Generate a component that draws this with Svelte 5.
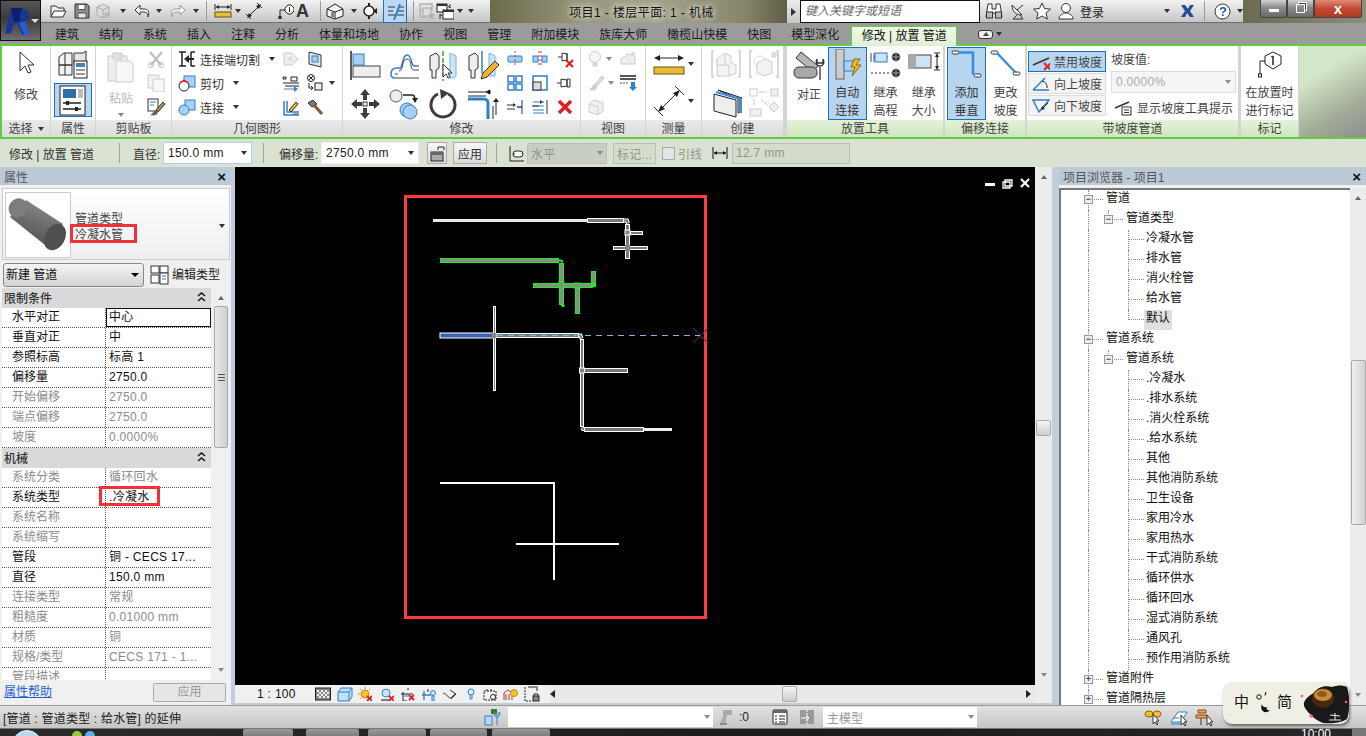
<script>
	const b = '#2f7fd0';
	const lb = '#a9d0f2';
	const icons = {
		open: `<path d="M2 15V4h5l2 2h6v3" fill="#f6f3e6" stroke="#333"/><path d="M2 15l3-6h12l-3 6z" fill="#fff" stroke="#333"/>`,
		save: `<path d="M2 2h12l2 2v12H2z" fill="#8c8f94" stroke="#333"/><rect x="5" y="2.500" width="7" height="5" fill="#fff" stroke="#555"/><rect x="5" y="11" width="8" height="5" fill="#e6e6e6" stroke="#555"/>`,
		sync: `<path d="M3 5l6-3 6 3v8l-6 3-6-3z" fill="#ddd" stroke="#aaa"/><path d="M3 5l6 3 6-3M9 8v8" fill="none" stroke="#aaa"/><circle cx="13" cy="13" r="3" fill="#bbb"/>`,
		undo: `<path d="M7 3L2 8l5 5V10h4c3 0 4 2 4 5 2-5 0-8-4-8H7z" fill="#fff" stroke="#333"/>`,
		redo: `<path d="M11 3l5 5-5 5V10H7c-3 0-4 2-4 5-2-5 0-8 4-8h4z" fill="#f4f4f4" stroke="#999"/>`,
		dim: `<path d="M1 2v6M17 2v6M2 5h14" stroke="#222" fill="none"/><path d="M2 5l3-2v4zM16 5l-3-2v4z" fill="#222"/><rect x="1" y="10" width="16" height="5" fill="#e7bd3a" stroke="#6b5310"/>`,
		diag: `<path d="M3 15L15 3" stroke="#222"/><path d="M2 16l2-5 3 3zM16 2l-5 2 3 3z" fill="#222"/><path d="M1 12l5 5M12 1l5 5" stroke="#222"/>`,
		tag: `<path d="M9 6l3-3h3l3 3v3l-3 3h-3L9 9z" fill="#fff" stroke="#222"/><path d="M9 8H4v7" fill="none" stroke="#222"/><rect x="2.500" y="14" width="3" height="3" fill="#222"/><path d="M13.500 5v5" stroke="#222"/>`,
		house: `<path d="M1 7l8-5 8 5v7l-8 3-8-3z" fill="#f4f4f4" stroke="#222"/><path d="M1 7l8 3 8-3M9 10v7" fill="none" stroke="#222"/><rect x="5" y="10" width="3" height="5" fill="#888"/>`,
		section: `<circle cx="9" cy="9" r="5" fill="#fff" stroke="#222" stroke-width="1.500"/><path d="M9 1v3M9 14v3" stroke="#222" stroke-width="2"/><path d="M13 9l4-3v6z" fill="#222"/>`,
		thin: `<path d="M2 5h7M2 9h5M2 13h7M13 5h7M12 9h7M11 13h7" stroke="#333"/><path d="M14 2L8 18" stroke="#2f7fd0" stroke-width="2"/>`,
		closed: `<path d="M3 2h12v6H3zM3 8v7h7" fill="none" stroke="#b3b3b3" stroke-width="1.500"/><rect x="6" y="6" width="8" height="8" fill="#ddd" stroke="#aaa"/><path d="M12 12l5 5M17 12l-5 5" stroke="#aaa" stroke-width="1.500"/>`,
		swin: `<rect x="1" y="2" width="10" height="8" fill="#fff" stroke="#222"/><rect x="1" y="2" width="10" height="2" fill="#333"/><rect x="7" y="8" width="11" height="9" fill="#fff" stroke="#222"/><rect x="7" y="8" width="11" height="2" fill="#333"/><path d="M14 2v4l-2-2M4 17v-5l2 2" fill="none" stroke="#222"/>`,
		cursor: `<path d="M7 2v19l5-5 3 7 3-1-3-7h6z" fill="#fff" stroke="#333"/>`,
		typeprops: `<path d="M2 8l5-4h8v12H2zM2 16h13v10H2z" fill="#f3f3f3" stroke="#333"/><path d="M17 4h9l3-2v14H17z" fill="#e4e4e4" stroke="#333"/><path d="M8 4v22" stroke="#333"/><rect x="17" y="12" width="13" height="17" fill="#fff" stroke="#222"/><rect x="19" y="14" width="9" height="4" fill="#4b7fb5"/><path d="M19 21h9M19 25h9" stroke="#333"/>`,
		props: `<rect x="2" y="1" width="25" height="29" fill="#fff" stroke="#222"/><rect x="5" y="4" width="13" height="9" fill="#2d6da8"/><rect x="20" y="4" width="5" height="9" fill="#bbb"/><path d="M5 18h18M5 24h18" stroke="#222" stroke-width="1.500"/><rect x="8" y="16" width="3" height="4" fill="#222"/><rect x="17" y="22" width="3" height="4" fill="#222"/>`,
		paste: `<rect x="1" y="4" width="19" height="25" fill="#eee" stroke="#ccc"/><rect x="6" y="1" width="9" height="6" fill="#e2e2e2" stroke="#ccc"/><path d="M9 9h14l3 3v18H9z" fill="#f7f7f7" stroke="#ccc"/>`,
		scissors: `<path d="M3 2l11 13M15 2L4 15" stroke="#bbb" stroke-width="2"/><circle cx="4" cy="15" r="2.500" fill="none" stroke="#bbb"/><circle cx="14" cy="15" r="2.500" fill="none" stroke="#bbb"/>`,
		copy: `<rect x="1" y="1" width="11" height="13" fill="#f2f2f2" stroke="#ccc"/><rect x="6" y="5" width="11" height="13" fill="#f8f8f8" stroke="#ccc"/>`,
		brush: `<rect x="1" y="1" width="10" height="12" fill="#fff" stroke="#333"/><path d="M3 4h6M3 7h4" stroke="#2f7fd0"/><path d="M16 4l-7 8 2 2 7-8z" fill="#b08a52" stroke="#333"/><path d="M9 12c-3 1-3 4-6 5 4 1 8 0 8-3z" fill="#666"/>`,
		cope: `<path d="M1 2h7M1 16h7M4 2v14M17 2h-4M17 16h-4M13 2v14" stroke="#222" stroke-width="1.500" fill="none"/><path d="M6 9l5-4v3h5v2h-5v3z" fill="#222"/>`,
		cut: `<rect x="6" y="2" width="11" height="11" fill="${lb}" stroke="${b}"/><circle cx="6" cy="12" r="5" fill="#fff" stroke="#222"/><path d="M2 9a5 5 0 0 1 8 0" fill="none" stroke="#d22" stroke-width="1.500"/>`,
		join: `<rect x="7" y="2" width="10" height="10" fill="${lb}" stroke="${b}"/><circle cx="6" cy="12" r="5" fill="${lb}" stroke="${b}"/>`,
		wallj: `<path d="M2 3h8l6 6-6 6H2z" fill="#eee" stroke="#ccc"/><path d="M10 6l-5 3 5 3z" fill="#ddd"/>`,
		openg: `<path d="M3 2l12 3v12L3 14z" fill="#e6e6e6" stroke="#333"/><rect x="6" y="6" width="6" height="6" fill="${lb}" stroke="#2f7fd0"/>`,
		wall2: `<path d="M1 9h16M3 12h14" stroke="#222"/><path d="M1 3v2h3V3z" fill="none" stroke="#222"/><path d="M2 15h10" stroke="${b}"/><path d="M12 12l4 3-4 3z" fill="${b}"/><path d="M9 3h6v4H9z" fill="none" stroke="#222"/>`,
		dmd: `<circle cx="5" cy="4" r="3.500" fill="#fff" stroke="#222"/><path d="M3 2l4 4M7 2L3 6" stroke="#222"/><rect x="9" y="9" width="7" height="7" fill="#eee" stroke="#222"/><path d="M3 9v5h4M5 12l2 2-2 2" fill="none" stroke="#222"/>`,
		joinprof: `<path d="M2 3v14h15M5 3v11h12" stroke="${b}" fill="none" stroke-width="1.500"/><path d="M7 12l7-8 2 2-7 8z" fill="#f0b030" stroke="#333"/><path d="M11 16h6" stroke="#555"/>`,
		hammer: `<path d="M2 5l5-3 4 4-5 3z" fill="#777" stroke="#333"/><path d="M8 7l8 9" stroke="#8a5a2a" stroke-width="3"/>`,
		align: `<path d="M1 1v29" stroke="#222" stroke-width="1.500"/><rect x="3" y="4" width="11" height="11" fill="${lb}" stroke="${b}"/><rect x="3" y="16" width="27" height="11" fill="#eee" stroke="#444"/>`,
		offset: `<path d="M2 24c0-4 2-6 6-6h3c3 0 2-13 7-13s4 11 7 11h5" fill="none" stroke="#2f7fd0" stroke-width="1.500"/><path d="M6 28h24M6 24h3M10 21c5 0 2-12 8-12s2 11 7 11h5" fill="none" stroke="#444"/><path d="M2 24c0 3 2 4 4 4" fill="none" stroke="#2f7fd0" stroke-width="1.500"/>`,
		mirrorp: `<path d="M2 6l6-3 3 3v12l-3 2v8H4v-8H2z" fill="#eee" stroke="#333"/><path d="M15 1v30" stroke="#3aaa3a" stroke-dasharray="5 2" stroke-width="1.500"/><path d="M28 6l-6-3v25h4l2-2z" fill="#cfe4f6" stroke="#7fb2de"/><path d="M15 14v13l3-3 2 4 2-1-2-4h4z" fill="#fff" stroke="#333"/>`,
		mirrord: `<path d="M2 6l6-3 3 3v12l-3 2v8H4v-8H2z" fill="#eee" stroke="#333"/><path d="M15 1v22" stroke="#2f7fd0" stroke-width="1.500"/><path d="M28 6l-6-3v23h6z" fill="#cfe4f6" stroke="#7fb2de"/><path d="M14 29l2-6 12-12 4 4-12 12z" fill="#f0b030" stroke="#333"/>`,
		move: `<path d="M15 1l5 6h-3v5h-4V7h-3zM15 31l5-6h-3v-5h-4v5h-3zM1 16l6-5v3h5v4H7v3zM30 16l-6-5v3h-5v4h5v3z" fill="#3c3c3c"/><rect x="13" y="14" width="4" height="4" fill="#fff" stroke="#333"/>`,
		copy2: `<circle cx="7" cy="8" r="6" fill="#eee" stroke="#555"/><path d="M14 7h9c3 0 3 4 3 5" fill="none" stroke="#222" stroke-width="1.500"/><path d="M23 10l3 5 3-5z" fill="#222"/><circle cx="18" cy="22" r="7" fill="${lb}" stroke="${b}"/><circle cx="21" cy="24" r="7" fill="${lb}" stroke="${b}"/>`,
		rotate: `<path d="M10 6a12 12 0 1 0 10 0" fill="none" stroke="#3c3c3c" stroke-width="3"/><path d="M12 1l9 4-8 6z" fill="#3c3c3c"/>`,
		trim: `<path d="M1 8h18M1 4h18" stroke="#222"/><path d="M19 4l4-2v4zM29 27V14" stroke="#222"/><path d="M1 11h16a4 4 0 0 1 4 4v16" fill="none" stroke="#2f7fd0" stroke-width="3"/><path d="M26 14l3-4 3 4z" fill="#222"/><path d="M26 18v13" stroke="#222"/>`,
		split: `<rect x="2" y="6" width="14" height="6" rx="1" fill="${lb}" stroke="${b}"/><path d="M9 1v16" stroke="#d33" stroke-dasharray="2 2"/>`,
		gap: `<rect x="2" y="6" width="5" height="6" fill="${lb}" stroke="${b}"/><rect x="11" y="6" width="5" height="6" fill="${lb}" stroke="${b}"/><path d="M8 1v16M10 1v16" stroke="#d33" stroke-dasharray="2 2"/>`,
		unpin: `<path d="M2 7h4M6 3v8l5-1V4z" fill="none" stroke="#333"/><path d="M11 3v8" stroke="#333"/><path d="M10 10l7 7M17 10l-7 7" stroke="#d22" stroke-width="2.200"/>`,
		array: `<rect x="2" y="2" width="6" height="6" fill="none" stroke="${b}" stroke-width="1.500"/><rect x="10" y="2" width="6" height="6" fill="none" stroke="${b}" stroke-width="1.500"/><rect x="2" y="10" width="6" height="6" fill="none" stroke="${b}" stroke-width="1.500"/><rect x="10" y="10" width="6" height="6" fill="none" stroke="${b}" stroke-width="1.500"/>`,
		scale: `<path d="M2 2h14v14H2z" fill="none" stroke="${b}" stroke-width="1.500"/><rect x="2" y="8" width="8" height="8" fill="#ddd" stroke="#333"/>`,
		pin: `<path d="M1 9h4M5 5v8l6-1V6zM11 5v8h3V5z" fill="none" stroke="#333"/>`,
		sp1: `<path d="M1 7h8M1 11h8" stroke="#333"/><path d="M7 5l3 2-3 2z" fill="#333"/><path d="M11 9h5" stroke="${b}" stroke-width="2"/><path d="M16 2v14" stroke="#333"/>`,
		sp2: `<path d="M2 4h11M2 8h11M2 12h11M2 15h11" stroke="${b}"/><path d="M1 8h7" stroke="#333"/><path d="M16 2v14" stroke="#333"/><path d="M9 2l3 2-3 2z" fill="#333"/>`,
		del: `<path d="M3 3l12 12M15 3L3 15" stroke="#e02020" stroke-width="3.500"/>`,
		bulb: `<circle cx="8" cy="7" r="5.500" fill="#f5f5f5" stroke="#ccc"/><path d="M6 13h4v3H6z" fill="#ddd" stroke="#ccc"/>`,
		brick: `<path d="M2 9l7-5 7 2v8H2z" fill="#eee" stroke="#ccc"/><circle cx="14" cy="4" r="2" fill="#ddd"/>`,
		paint: `<path d="M15 2l-7 8 2 2 7-8z" fill="#ddd" stroke="#ccc"/><path d="M8 10c-3 1-3 4-6 6 4 1 8 0 8-3z" fill="#ccc"/>`,
		thinw: `<path d="M1 2h16M1 5h16" stroke="#222" stroke-width="1.500"/><path d="M1 9h9" stroke="#555" stroke-dasharray="2 1"/><path d="M12 8h4v5h2l-4 4-4-4h2z" fill="${b}"/>`,
		wallbox: `<path d="M2 6l5-4 9 3v8l-5 4-9-3z" fill="#f0f0f0" stroke="#ccc"/><path d="M2 6l9 3v8" fill="none" stroke="#ccc"/>`,
		measure: `<path d="M4 6h24" stroke="#222"/><path d="M1 6l6-3v6zM31 6l-6-3v6z" fill="#222"/><rect x="1" y="15" width="30" height="7" fill="#e8bc35" stroke="#6b5310"/>`,
		mdiag: `<path d="M6 26L26 6" stroke="#222"/><path d="M5 27l3-7 4 4zM27 5l-7 3 4 4z" fill="#222"/><path d="M1 22l9 9M22 1l9 9" stroke="#222"/>`,
		cbox: `<path d="M3 2H1v26h2M27 2h2v26h-2" fill="none" stroke="#ccc" stroke-width="1.500"/><path d="M6 10l8-6 6 3v7l5 2v8l-7 3H6z" fill="#f4f4f4" stroke="#ccc"/><path d="M6 16h12v11M14 4v12" fill="none" stroke="#ccc"/>`,
		cvoid: `<path d="M3 2H1v26h2M27 2h2v26h-2" fill="none" stroke="#ccc" stroke-width="1.500"/><circle cx="11" cy="13" r="6" fill="none" stroke="#ddd"/><path d="M8 14l8-4 7 3v11l-8 3-7-3z" fill="#f2f2f2" stroke="#ccc"/><circle cx="25" cy="6" r="3" fill="#ddd"/>`,
		groups: `<path d="M4 8l22 6v17L4 25z" fill="#eee" stroke="#222"/><path d="M8 4l24 8v14l-4 1V13z" fill="#d5dce4" stroke="#222"/><path d="M6 6l24 7v14" fill="none" stroke="#3a8cdc" stroke-width="2"/>`,
		assembly: `<rect x="1" y="3" width="7" height="7" fill="none" stroke="#ccc"/><path d="M10 6h8" stroke="#ccc"/><rect x="22" y="3" width="7" height="7" fill="#eee" stroke="#ccc"/><path d="M5 12v8M12 13l7 7" stroke="#ccc"/><rect x="1" y="23" width="11" height="7" fill="#f0f0f0" stroke="#ccc"/><path d="M25 16l5 5-5 5-5-5z" fill="#eee" stroke="#ccc"/>`,
		jalign: `<path d="M3 8l5-6 17 14-5 6z" fill="#b5b5b5" stroke="#333"/><rect x="1" y="17" width="23" height="11" rx="5" fill="#a8a8a8" stroke="#333"/><path d="M27 17v13M24 9c-2 4 0 7 3 7s5-3 3-7v4h-6z" fill="#fff" stroke="#333" stroke-width="1.300"/>`,
		auto: `<rect x="5" y="0" width="8" height="30" fill="#ccc" stroke="#666"/><path d="M13 12h12v10H13z" fill="${lb}" stroke="${b}"/><path d="M23 10l6 0-4 6h5l-9 11 3-9h-4z" fill="#f5b921" stroke="#8a6408"/>`,
		inhele: `<path d="M1 4v9M4 4v9M4 8h14" stroke="#444" fill="none"/><rect x="5" y="4" width="12" height="9" fill="#cde4f6" stroke="${b}"/><path d="M1 24h22" stroke="#333" stroke-dasharray="2 2"/><circle cx="26" cy="8" r="4" fill="#333"/><circle cx="26" cy="24" r="4" fill="#333"/><path d="M21 8h10M26 3v10M21 24h10M26 19v10" stroke="#999"/>`,
		inhsize: `<rect x="1" y="6" width="22" height="13" fill="#cde4f6" stroke="#444"/><rect x="1" y="6" width="7" height="13" fill="#aaa"/><path d="M26 4h6M26 21h6M29 6v13" stroke="#222"/><path d="M29 4l-2 4h4zM29 21l-2-4h4z" fill="#222"/>`,
		addv: `<rect x="1" y="2" width="7" height="3" rx="1.500" fill="#fff" stroke="#333"/><path d="M8 3.500h14v22" fill="none" stroke="#3a8cdc" stroke-width="2.500"/><rect x="23" y="25" width="7" height="3" rx="1.500" fill="#fff" stroke="#333"/>`,
		chg: `<rect x="1" y="2" width="7" height="3" rx="1.500" fill="#fff" stroke="#333"/><path d="M7 4l18 19" fill="none" stroke="#3a8cdc" stroke-width="2.500"/><rect x="23" y="23" width="7" height="3" rx="1.500" fill="#fff" stroke="#333"/>`,
		noslope: `<path d="M1 12l16-7" stroke="#333" stroke-width="1.500"/><path d="M12 10l7 7M19 10l-7 7" stroke="#d22" stroke-width="2"/>`,
		up: `<path d="M1 15h16M1 15L13 3" stroke="${b}" stroke-width="1.500"/><path d="M10 6a6 6 0 0 1 5 7" fill="none" stroke="#222"/>`,
		down: `<path d="M1 3h16L7 15z" fill="none" stroke="${b}" stroke-width="1.500"/><path d="M16 6l-5 5" stroke="#222"/><path d="M9 13l1-4 3 3z" fill="#222"/>`,
		slopetip: `<path d="M1 10l14-6" stroke="#333" stroke-width="1.500"/><rect x="8" y="9" width="9" height="8" fill="#fff" stroke="#333"/><path d="M10 12h5M10 14.500h5" stroke="#333"/>`,
		tagp: `<path d="M17 2l8 4v8l-8 5-8-5V6z" fill="#fff" stroke="#222"/><path d="M17 6v9" stroke="#222" stroke-width="1.500"/><path d="M15 7l2-1" stroke="#222"/><path d="M9 11H4v14" fill="none" stroke="#222"/><rect x="2.500" y="24" width="3" height="3" fill="#fff" stroke="#222"/>`,
		lock: `<path d="M9 6V3h6v3" fill="none" stroke="#222"/><rect x="2" y="8" width="12" height="9" fill="#aaa" stroke="#222"/><rect x="2" y="8" width="12" height="3" fill="#666"/>`,
		level: `<path d="M2 1v15h14" fill="none" stroke="#222"/><rect x="5" y="6" width="10" height="6" rx="3" fill="#fff" stroke="#222"/><path d="M5 9h2" stroke="#222"/>`,
		width: `<path d="M1 2v12M15 2v12M2 8h12" stroke="#111"/><path d="M2 8l3-2v4zM14 8l-3-2v4z" fill="#111"/>`,
		etype: `<rect x="1" y="1" width="8" height="7" fill="#fff" stroke="#333"/><rect x="10" y="1" width="8" height="7" fill="#fff" stroke="#333"/><rect x="1" y="10" width="8" height="8" fill="#fff" stroke="#333"/><rect x="10" y="8" width="8" height="11" fill="#fff" stroke="#333"/><path d="M12 11h4M12 14h4" stroke="#2f7fd0"/>`,
		detail: `<rect x="0.500" y="1" width="15" height="12" fill="#888" stroke="#222"/><path d="M2 3h2v2H2zM6 3h2v2H6zM10 3h2v2h-2zM4 5h2v2H4zM8 5h2v2H8zM12 5h2v2h-2zM2 7h2v2H2zM6 7h2v2H6zM10 7h2v2h-2zM4 9h2v2H4zM8 9h2v2H8zM12 9h2v2h-2z" fill="#eee"/>`,
		vstyle: `<path d="M1 6l3-4h11v9l-3 4H1z" fill="#bfe0f6" stroke="${b}"/><path d="M1 6h11v9M12 6l3-4" fill="none" stroke="${b}"/>`,
		sun: `<circle cx="7" cy="7" r="4" fill="#f4c430" stroke="#c58a10"/><path d="M7 0v2M0 7h2M2 2l1 1M12 2l-1 1M2 12l1-1" stroke="#c58a10"/><path d="M9 9l5 5M14 9l-5 5" stroke="#d22" stroke-width="1.800"/>`,
		shadow: `<circle cx="6" cy="6" r="4" fill="#cfe6f8" stroke="${b}"/><path d="M1 13h8" stroke="#555" stroke-width="1.500"/><path d="M9 9l5 5M14 9l-5 5" stroke="#d22" stroke-width="1.800"/>`,
		crop: `<path d="M1 7h12M3 5v9h4" fill="none" stroke="#222"/><path d="M8 1v2" stroke="#222"/><path d="M4 9h5" stroke="${b}"/><path d="M9 8l5 5M14 8l-5 5" stroke="#d22" stroke-width="1.800"/>`,
		crop2: `<path d="M1 8h9M3 4v9" stroke="${b}" stroke-width="1.400" fill="none"/><path d="M7 2v3" stroke="#222"/><circle cx="12" cy="6" r="2.500" fill="#cfe6f8" stroke="${b}"/><path d="M11 9h2v5h-2z" fill="#cfe6f8" stroke="${b}"/>`,
		glass: `<path d="M1 6c2-3 5 4 7 4 3 0 3-4 6-4M8 2l6 4-5 5" fill="none" stroke="#333"/>`,
		bulb2: `<circle cx="4" cy="4" r="3" fill="#d7eeff" stroke="${b}"/><path d="M3 7v4h2V7" fill="none" stroke="${b}"/>`,
		camera: `<path d="M1 4h12v9H1z" fill="none" stroke="#222" stroke-dasharray="2 1"/><circle cx="10" cy="10" r="2.500" fill="#fff" stroke="#222"/><path d="M4 2v2M8 2v2" stroke="#222"/>`,
		fam: `<path d="M1 13V6l4-3 4 3v7M3 7v6M6 7v6" fill="none" stroke="#b33"/><circle cx="11" cy="6" r="3.500" fill="#f4c430" stroke="#c58a10"/>`,
		dimlock: `<path d="M1 1v14h6" fill="none" stroke="#222" stroke-dasharray="2 1"/><path d="M4 1h8M13 0v5" stroke="#222"/><rect x="9" y="10" width="6" height="5" fill="#888" stroke="#222"/><path d="M10 10V8h4v2" fill="none" stroke="#222"/>`,
		wset: `<path d="M7 1h6v5H7z" fill="#3c7a2e"/><rect x="1" y="8" width="7" height="9" fill="#bcd6ee" stroke="${b}"/><path d="M13 7v10M11 4c-2 3 0 5 2 5s4-2 2-5v3h-4z" fill="#fff" stroke="${b}"/>`,
		press: `<path d="M5 1h9v5H9l-2 9H2l3-7z" fill="#aaa"/><path d="M2 15h7" stroke="#888" stroke-width="2"/>`,
		plist: `<rect x="1" y="1" width="14" height="14" rx="1" fill="#fff" stroke="#222"/><rect x="1" y="1" width="14" height="3" fill="#666"/><path d="M3 7h2M7 7h6M3 10h2M7 10h6M3 13h2M7 13h6" stroke="#222"/>`,
		movein: `<rect x="1" y="1" width="14" height="14" fill="#999"/><path d="M8 1v14" stroke="#fff" stroke-dasharray="2 1"/><path d="M2 9h8M7 6l3 3-3 3" fill="none" stroke="#fff"/>`,
		k1: `<ellipse cx="5" cy="5" rx="4" ry="3" fill="#f0c030" stroke="#8a6408"/><ellipse cx="13" cy="5" rx="4" ry="3" fill="#f0c030" stroke="#8a6408"/><path d="M9 5v10l2-2 2 3 1-1-2-3h3z" fill="#fff" stroke="#333"/>`,
		k2: `<path d="M1 13L8 3h9l-6 10z" fill="#fff" stroke="${b}"/><path d="M3 9h6M1 15h9" stroke="${b}"/><path d="M11 6v10l2-2 2 3 1-1-2-3h3z" fill="#fff" stroke="#333"/>`,
		k3: `<path d="M3 1h8v3H3zM1 6h11v3H1z" fill="#f0a060" stroke="#8a4a10"/><path d="M6 9v7" stroke="#666" stroke-width="1.500"/><path d="M12 6v10l2-2 2 3 1-1-2-3h3z" fill="#fff" stroke="#333"/>`
	};

	const qat = [
		{ n: 'open', ml: 8 }, { n: 'save', ml: 6 }, { n: 'sync', ml: 3 }, { d: 1, ml: 8 },
		{ n: 'undo', ml: 7 }, { d: 1, ml: 5 }, { n: 'redo', ml: 7 }, { d: 1, ml: 6 }, { s: 1, ml: 7 },
		{ n: 'dim', ml: 7 }, { d: 1, ml: 3 }, { n: 'diag', ml: 4 }, { n: 'tag', ml: 13 }, { t: 'A', ml: 2 }, { s: 1, ml: 8 },
		{ n: 'house', ml: 5 }, { d: 1, ml: 7 }, { n: 'section', ml: 3 }, { n: 'thin', ml: 6, on: 1 }, { s: 1, ml: 5 },
		{ n: 'closed', ml: 3 }, { n: 'swin', ml: 1 }, { d: 1, ml: 3 }, { d: 1, ml: 5, bar: 1 }
	];

	const tabs = ['建筑', '结构', '系统', '插入', '注释', '分析', '体量和场地', '协作', '视图', '管理', '附加模块', '族库大师', '橄榄山快模', '快图', '模型深化'];

	const constraint = [
		['水平对正', '中心', 0, 1], ['垂直对正', '中', 0], ['参照标高', '标高 1', 0], ['偏移量', '2750.0', 0],
		['开始偏移', '2750.0', 1], ['端点偏移', '2750.0', 1], ['坡度', '0.0000%', 1]
	];
	const mech = [
		['系统分类', '循环回水', 1], ['系统类型', '.冷凝水', 0], ['系统名称', '', 1], ['系统缩写', '', 1],
		['管段', '铜 - CECS 17...', 0], ['直径', '150.0 mm', 0], ['连接类型', '常规', 1], ['粗糙度', '0.01000 mm', 1],
		['材质', '铜', 1], ['规格/类型', 'CECS 171 - 1...', 1], ['管段描述', '', 1]
	];

	const tree = [
		['管道', 0, 'm'], ['管道类型', 1, 'm'], ['冷凝水管', 2], ['排水管', 2], ['消火栓管', 2], ['给水管', 2], ['默认', 2, 'sel'],
		['管道系统', 0, 'm'], ['管道系统', 1, 'm'], ['.冷凝水', 2], ['.排水系统', 2], ['.消火栓系统', 2], ['.给水系统', 2], ['其他', 2],
		['其他消防系统', 2], ['卫生设备', 2], ['家用冷水', 2], ['家用热水', 2], ['干式消防系统', 2], ['循环供水', 2], ['循环回水', 2],
		['湿式消防系统', 2], ['通风孔', 2], ['预作用消防系统', 2], ['管道附件', 0, 'p'], ['管道隔热层', 0, 'p']
	];

	const viewIcons = [['detail', 16, 14, 17], ['vstyle', 16, 16, 6], ['sun', 14, 14, 5], ['shadow', 14, 14, 8], ['crop', 15, 14, 6], ['crop2', 15, 14, 6], ['glass', 15, 13, 6], ['bulb2', 8, 12, 10], ['camera', 14, 14, 8], ['fam', 16, 14, 6], ['dimlock', 16, 16, 5]];

	const white = [[587, 218, 37, 5], [625, 224, 5, 35], [630, 231, 13, 4], [613, 246, 35, 4], [493, 306, 3, 85], [496, 333, 83, 5], [580, 339, 4, 88], [584, 368, 44, 5], [584, 427, 60, 5]];
	const green = [[440, 258, 119, 5], [559, 263, 5, 42], [533, 283, 60, 5], [591, 271, 5, 16], [575, 288, 5, 26]];
	const buttons = [[50, 243], [53, 306], [58, 368], [57, 430], [58, 492]];
</script>

{#snippet ic(name, w = 18, h = w)}
	<svg class="ic" width={w} height={h} viewBox="0 0 {w} {h}">{@html icons[name]}</svg>
{/snippet}

{#snippet big(name, l1, l2 = '', on = false, dim = false, w = 32, h = 32)}
	<div class="big" class:on class:dim>
		<div class="bigicon">{@render ic(name, w, h)}</div>
		<span>{l1}</span>
		{#if l2}<span>{l2}</span>{/if}
	</div>
{/snippet}

{#snippet chevrons()}
	<svg class="chev" width="9" height="10" viewBox="0 0 9 10"><path d="M1 4l3.500-3L8 4M1 9l3.500-3L8 9" fill="none" stroke="#111" stroke-width="1.500"/></svg>
{/snippet}

<div class="app">
	<div class="appbtn">
		<svg width="30" height="34" viewBox="0 0 30 34"><path d="M2 30L8 4h11l6 4 1 6-4 4 5 13h-8l-4-11-4-1-3 10z" fill="#1a3596"/><path d="M8 4l3 14 7-2-2-3 3-9z" fill="#0e1f68"/><path d="M16 19l6-2 5 14h-6z" fill="#2c5cd4"/></svg>
		<i class="tri light"></i>
	</div>

	<div class="title">
		<div class="qat">
			{#each qat as q}
				{#if q.s}
					<i class="qsep" style="margin-left:{q.ml}px"></i>
				{:else if q.d}
					<i class="tri" class:bar={q.bar} style="margin-left:{q.ml}px"></i>
				{:else if q.t}
					<b class="bigA" style="margin-left:{q.ml}px">{q.t}</b>
				{:else}
					<span class="qb" class:on={q.on} style="margin-left:{q.ml}px">{@render ic(q.n)}</span>
				{/if}
			{/each}
		</div>
		<div class="doc"><span>项目1 - 楼层平面: 1 - 机械</span></div>
		<div class="arrowcell"><i class="tri r"></i></div>
		<div class="search">键入关键字或短语</div>
		<div class="tools">
			<svg class="tool" width="18" height="18" viewBox="0 0 18 18"><path d="M3 2h4v5h4V2h4l2 13H11v-4H7v4H1z" fill="#fff" stroke="#333"/><rect x="1.500" y="10" width="6" height="6" fill="#bbb" stroke="#333"/><rect x="10.500" y="10" width="6" height="6" fill="#bbb" stroke="#333"/></svg>
			<svg class="tool" width="18" height="18" viewBox="0 0 18 18"><path d="M3 3c0 7 4 10 10 10" fill="#eee" stroke="#333"/><path d="M3 3l10 10" stroke="#333"/><path d="M8 8l6-5M8 13l-4 4h10l-3-4" fill="none" stroke="#333"/></svg>
			<svg class="tool" width="18" height="18" viewBox="0 0 18 18"><path d="M9 1l2.500 5.500 6 .6-4.500 4 1.300 6L9 14l-5.300 3.100 1.300-6-4.500-4 6-.6z" fill="#fff" stroke="#333"/></svg>
			<svg class="tool" width="18" height="18" viewBox="0 0 18 18"><circle cx="9" cy="6" r="4.500" fill="#fff" stroke="#333"/><path d="M2 17c0-4 4-5 5-6h4c1 1 5 2 5 6z" fill="#fff" stroke="#333"/></svg>
			<span class="login">登录</span>
			<i class="tri t1"></i>
			<svg class="xlogo" width="15" height="14" viewBox="0 0 15 14"><path d="M1 1h4l3 4 2-4h4l-4 6 4 6h-4L7 9l-2 4H1l4-6z" fill="#1f4e96"/></svg>
			<i class="qsep t2"></i>
			<svg class="help" width="17" height="17" viewBox="0 0 17 17"><circle cx="8.500" cy="8.500" r="7.500" fill="#fff" stroke="#333"/></svg>
			<b class="q">?</b>
			<i class="tri t3"></i>
		</div>
		<div class="winside">
			<div class="wbtn"><i class="wmin"></i></div>
			<div class="wbtn"><i class="wres"></i></div>
			<div class="wbtn wclose">x</div>
		</div>
	</div>

	<div class="tabs">
		{#each tabs as t}<span class="tab">{t}</span>{/each}
		<span class="tab active">修改 | 放置 管道</span>
		<span class="tabmin"><i class="tri up"></i></span>
		<i class="tri t4"></i>
	</div>

	<div class="ribbon">
		<section class="panel" style="width:48px">
			<div class="pbody">{@render big('cursor', '修改', '', false, false, 26, 32)}</div>
			<footer>选择 <i class="tri"></i></footer>
		</section>
		<section class="panel" style="width:44px">
			<div class="pbody col">
				<div class="typeic">{@render ic('typeprops', 32, 32)}</div>
				<div class="propbtn">{@render ic('props', 30, 31)}</div>
			</div>
			<footer>属性</footer>
		</section>
		<section class="panel" style="width:75px">
			<div class="pbody">
				<div class="clip">
					<div class="bigicon tallic">{@render ic('paste', 28, 32)}</div>
					<span class="dimt">粘贴</span>
					<i class="tri grey mt"></i>
				</div>
				<div class="smallcol">
					<div>{@render ic('scissors')}</div>
					<div>{@render ic('copy')}</div>
					<div>{@render ic('brush')}</div>
				</div>
			</div>
			<footer>剪贴板</footer>
		</section>
		<section class="panel" style="width:170px">
			<div class="pbody geo">
				<div class="grow">{@render ic('cope')}<span>连接端切割</span><i class="tri"></i></div>
				<div class="cell">{@render ic('wallj')}</div>
				<div class="cell">{@render ic('openg')}</div>
				<div class="grow">{@render ic('cut')}<span>剪切</span><i class="tri"></i></div>
				<div class="cell">{@render ic('wall2')}</div>
				<div class="cell wide">{@render ic('dmd')}<i class="tri"></i></div>
				<div class="grow">{@render ic('join')}<span>连接</span><i class="tri"></i></div>
				<div class="cell">{@render ic('joinprof')}</div>
				<div class="cell">{@render ic('hammer')}</div>
			</div>
			<footer>几何图形</footer>
		</section>
		<section class="panel" style="width:237px">
			<div class="pbody">
				<div class="modbig">
					{#each ['align', 'offset', 'mirrorp', 'mirrord', 'move', 'copy2', 'rotate', 'trim'] as n}
						<div>{@render ic(n, 32, 32)}</div>
					{/each}
				</div>
				<div class="modsmall">
					{#each ['split', 'gap', 'unpin', 'array', 'scale', 'pin', 'sp1', 'sp2', 'del'] as n}
						<div>{@render ic(n)}</div>
					{/each}
				</div>
			</div>
			<footer>修改</footer>
		</section>
		<section class="panel" style="width:64px">
			<div class="pbody viewg">
				<div>{@render ic('bulb', 16, 18)}<i class="tri grey"></i></div>
				<div>{@render ic('brick')}</div>
				<div>{@render ic('paint')}<i class="tri grey"></i></div>
				<div>{@render ic('thinw')}</div>
				<div>{@render ic('wallbox')}</div>
				<div></div>
			</div>
			<footer>视图</footer>
		</section>
		<section class="panel" style="width:55px">
			<div class="pbody measure">
				<div>{@render ic('measure', 32, 24)}<i class="tri"></i></div>
				<div>{@render ic('mdiag', 32, 32)}<i class="tri"></i></div>
			</div>
			<footer>测量</footer>
		</section>
		<section class="panel" style="width:81px">
			<div class="pbody create">
				<div>{@render ic('cbox', 30, 30)}</div>
				<div>{@render ic('cvoid', 30, 30)}</div>
				<div>{@render ic('groups', 32, 32)}</div>
				<div>{@render ic('assembly', 30, 32)}</div>
			</div>
			<footer>创建</footer>
		</section>
		<section class="panel ctx first" style="width:156px">
			<div class="pbody pad3">
				{@render big('jalign', '对正')}
				{@render big('auto', '自动', '连接', true)}
				{@render big('inhele', '继承', '高程')}
				{@render big('inhsize', '继承', '大小')}
			</div>
			<footer>放置工具</footer>
		</section>
		<section class="panel ctx next" style="width:80px">
			<div class="pbody pad2">
				{@render big('addv', '添加', '垂直', true)}
				{@render big('chg', '更改', '坡度')}
			</div>
			<footer>偏移连接</footer>
		</section>
		<section class="panel ctx next" style="width:211px">
			<div class="pbody slope">
				<div class="slopebtns">
					<div class="sb on">{@render ic('noslope')}禁用坡度</div>
					<div class="sb">{@render ic('up')}向上坡度</div>
					<div class="sb">{@render ic('down')}向下坡度</div>
				</div>
				<div class="slopeval">
					<span class="sl">坡度值:</span>
					<div class="sc">0.0000%<i class="tri grey"></i></div>
					<div class="st">{@render ic('slopetip')}显示坡度工具提示</div>
				</div>
			</div>
			<footer>带坡度管道</footer>
		</section>
		<section class="panel ctx last" style="width:57px">
			<div class="pbody">{@render big('tagp', '在放置时', '进行标记', false, false, 28, 30)}</div>
			<footer>标记</footer>
		</section>
		<div class="ribfill"></div>
	</div>

	<div class="options">
		<span class="o1">修改 | 放置 管道</span>
		<i class="osep s1"></i>
		<span class="o2">直径:</span>
		<div class="ocombo c1">150.0 mm<i class="tri"></i></div>
		<i class="osep s2"></i>
		<span class="o3">偏移量:</span>
		<div class="ocombo c2">2750.0 mm<i class="tri"></i></div>
		<div class="obtn lock">{@render ic('lock', 16, 18)}</div>
		<div class="obtn apply">应用</div>
		<i class="osep s3"></i>
		<div class="olevel">{@render ic('level', 16, 17)}</div>
		<div class="odis level">水平<i class="tri grey"></i></div>
		<div class="odis tagb">标记...</div>
		<i class="chk"></i>
		<span class="lead">引线</span>
		<div class="owidth">{@render ic('width', 16, 16)}</div>
		<div class="odis dist">12.7 mm</div>
	</div>

	<div class="main">
		<aside class="props">
			<header class="phead"><span>属性</span><b>×</b></header>
			<div class="typesel">
				<div class="thumb">
					<svg width="64" height="64" viewBox="0 0 64 64">
						<defs><linearGradient id="cy" x1="0.700" y1="0" x2="0.300" y2="1"><stop offset="0" stop-color="#8c8c8c"/><stop offset="0.500" stop-color="#6a6a6a"/><stop offset="1" stop-color="#4a4a4a"/></linearGradient></defs>
						<path d="M4 24L20 7l37 24-13 25z" fill="url(#cy)"/>
						<ellipse cx="49" cy="44" rx="10" ry="14" transform="rotate(28 49 44)" fill="#4f4f4f"/>
						<ellipse cx="12" cy="15" rx="9" ry="10" transform="rotate(35 12 15)" fill="#7d7d7d"/>
					</svg>
				</div>
				<div class="typetxt"><span>管道类型</span><span>冷凝水管</span></div>
				<i class="tri arrow"></i>
				<div class="redbox one"></div>
			</div>
			<div class="newrow">
				<div class="newcombo"><span>新建 管道</span><i class="tri"></i></div>
				<div class="edittype">{@render ic('etype', 19, 20)}<span>编辑类型</span></div>
			</div>
			<div class="propbody">
				<div class="ptable">
					<div class="sect">限制条件{@render chevrons()}</div>
					{#each constraint as r}
						<div class="prow" class:dim={r[2]}><span class="lab">{r[0]}</span><span class="val" class:edit={r[3]}>{r[1]}</span></div>
					{/each}
					<div class="sect">机械{@render chevrons()}</div>
					{#each mech as r, i}
						<div class="prow" class:dim={r[2]}>
							<span class="lab">{r[0]}</span><span class="val">{r[1]}</span>
							{#if i === 1}<div class="redbox two"></div>{/if}
						</div>
					{/each}
				</div>
				<div class="pscroll">
					<i class="tri up grey"></i>
					<div class="pthumb"><span></span></div>
					<i class="tri grey end"></i>
				</div>
			</div>
			<div class="pfoot"><a href="#help">属性帮助</a><div class="papply">应用</div></div>
		</aside>

		<div class="viewwrap">
			<div class="viewtop">
				<svg class="draw" width="800" height="518" viewBox="235 167 800 518">
					<rect x="405.500" y="196.500" width="300" height="421" fill="none" stroke="#ff3b3b" stroke-width="3"/>
					<rect x="433" y="219" width="154" height="3" fill="#e8e8e8"/>
					<rect x="440" y="333" width="53" height="5" fill="#3c62b8" stroke="#fff" stroke-width="1"/>
					<rect x="644" y="428" width="28" height="3" fill="#eee"/>
					<path d="M624 220.500h3l1 3M579 335.500h1.500l1 3M582 427.500l1 1.500h2" fill="none" stroke="#fff" stroke-width="4"/>
					<path d="M624 220.500h3l1 3M579 335.500h1.500l1 3M582 427.500l1 1.500h2" fill="none" stroke="#777" stroke-width="2"/>
					{#each white as p}
						<rect x={p[0] + 0.5} y={p[1] + 0.5} width={p[2] - 1} height={p[3] - 1} fill="#7a7a7a" stroke="#fff"/>
					{/each}
					{#each green as p}
						<rect x={p[0] + 0.5} y={p[1] + 0.5} width={p[2] - 1} height={p[3] - 1} fill="#8a8a8a" stroke="#1cf01c"/>
					{/each}
					<path d="M559 260.500h2.500l1 2M594 283v2l-2 1M561.500 304l1 2h2" fill="none" stroke="#1cf01c" stroke-width="2"/>
					<rect x="625" y="230" width="5" height="5" fill="#888" stroke="#fff"/>
					<rect x="625" y="245" width="5" height="6" fill="#888"/>
					<rect x="559" y="282" width="5" height="6" fill="#888" stroke="#1cf01c"/>
					<rect x="574" y="283" width="6" height="5" fill="#888" stroke="#1cf01c"/>
					<rect x="491.500" y="333" width="5" height="5" fill="#888"/>
					<rect x="579.500" y="368" width="5" height="5" fill="#888" stroke="#fff"/>
					<path d="M497 335.500H700" fill="none" stroke="#74bcdc" stroke-dasharray="6 5"/>
					<path d="M693 328l15 15M708 328l-15 15" stroke="#71107a"/>
					<path d="M440 483h114v97M516 544h103" fill="none" stroke="#fff" stroke-width="2"/>
					<rect x="985" y="183" width="10" height="3" fill="#fff"/>
					<path d="M1005 180h7v6h-7zM1003 182h7v6h-7z" fill="#000" stroke="#fff" stroke-width="1.300"/>
					<path d="M1021 179l8 8M1029 179l-8 8" stroke="#fff" stroke-width="2.200"/>
				</svg>
				<div class="vscroll">
					<i class="tri up grey"></i>
					<div class="vthumb"></div>
					<i class="tri grey end"></i>
				</div>
			</div>
			<div class="viewbar">
				<span class="scale">1 : 100</span>
				{#each viewIcons as v}
					<span class="vi" style="margin-left:{v[3]}px">{@render ic(v[0], v[1], v[2])}</span>
				{/each}
				<div class="hscroll">
					<i class="tri l"></i>
					<div class="hthumb"></div>
					<i class="tri r"></i>
				</div>
				<div class="grip"></div>
			</div>
		</div>

		<aside class="browser">
			<header class="phead"><span>项目浏览器 - 项目1</span><b>×</b></header>
			<div class="bbody">
				<div class="tree">
					{#each tree as t, i}
						<div class="node" style="padding-left:{45 + t[1] * 20}px">
							<i class="vl" class:half={i === tree.length - 1}></i>
							{#if t[1] === 2}
								<i class="vl v3" class:half={i === 6}></i>
								<i class="hl"></i>
							{:else}
								<i class="hl hl{t[1]}"></i>
								{#if t[1] === 1}<i class="vl v2"></i>{/if}
								<i class="exp e{t[1]}">{t[2] === 'm' ? '−' : '+'}</i>
							{/if}
							<span class:sel={t[2] === 'sel'}>{t[0]}</span>
						</div>
					{/each}
				</div>
				<div class="bscroll">
					<i class="tri up grey"></i>
					<div class="bthumb"></div>
					<i class="tri grey end"></i>
				</div>
			</div>
		</aside>
	</div>

	<div class="status">
		<span class="stext">[管道 : 管道类型 : 给水管] 的延伸</span>
		<span class="sbox b1">{@render ic('wset', 18, 18)}</span>
		<div class="scombo wsc"><i class="tri grey"></i></div>
		<span class="sbox b2">{@render ic('press', 16, 16)}<em>:0</em></span>
		<span class="sbox b3">{@render ic('plist', 16, 16)}</span>
		<span class="sbox b4">{@render ic('movein', 16, 16)}</span>
		<div class="scombo mod"><span>主模型</span><i class="tri grey"></i></div>
		<span class="sbox b5">{@render ic('k1', 18, 17)}</span>
		<span class="sbox b6">{@render ic('k2', 19, 17)}</span>
		<span class="sbox b7">{@render ic('k3', 18, 17)}</span>
	</div>

	<div class="taskbar">
		<i class="orb"></i>
		<i class="dot g"></i><i class="dot bl"></i>
		<div class="tbtns">
			{#each buttons as t}<i class="tb" style="width:{t[0]}px;left:{t[1]}px"></i>{/each}
		</div>
		<span class="clock">10:00</span>
		<i class="desk"></i>
	</div>

	<div class="ime">
		<span class="c1">中</span>
		<svg class="taiji" width="14" height="24" viewBox="0 0 14 24"><circle cx="3" cy="6" r="2.200" fill="none" stroke="#111"/><path d="M9 1c2 0 2 3-1 4 1-1 1-2 1-4z" fill="#111"/><path d="M6 13c-2 4 0 9 5 8 1 0 2-1 3-2-3 1-4-1-3-3-3 1-5-1-5-3z" fill="#111"/></svg>
		<span class="c2">简</span>
		<svg class="tea" width="50" height="42" viewBox="0 0 50 42">
			<path d="M6 26c-4-6 3-12 9-15 3-5 10-8 18-6 6-2 11-2 15 0 3 8 3 24 0 32-6 4-16 5-24 4-8-3-14-9-18-15z" fill="#191919"/>
			<ellipse cx="24" cy="16" rx="11" ry="10" fill="#4a2810"/>
			<ellipse cx="24" cy="13" rx="9" ry="6" fill="#c88c3c"/>
			<ellipse cx="23" cy="12" rx="5" ry="3" fill="#8e5a1e"/>
			<path d="M30 38h12M36 31v7M31 33l10 1" stroke="#f1f0e6"/>
			<circle cx="3" cy="14" r="1.300" fill="#e85a9c"/><circle cx="47" cy="20" r="1.300" fill="#e85a9c"/><circle cx="12" cy="34" r="1.800" fill="#ef62a6"/>
		</svg>
	</div>
</div>

<style>
	:global(body) {
		margin: 0;
		background: #000;
	}

	.app {
		position: relative;
		width: 1366px;
		height: 736px;
		overflow: hidden;
		display: flex;
		flex-direction: column;
		font: 12px "Liberation Sans", "Noto Sans CJK SC", sans-serif;
		color: #222;
		background: #c0cddb;
	}

	.ic { display: block; flex: none; }

	i { display: block; font-style: normal; }

	.tri {
		flex: none;
		width: 0;
		height: 0;
		border-left: 3px solid transparent;
		border-right: 3px solid transparent;
		border-top: 4px solid #333;
	}
	.tri.light { border-top-color: #ddd; border-left-width: 4px; border-right-width: 4px; border-top-width: 4px; }
	.tri.grey { border-top-color: #8a8a8a; }
	.tri.up { border-top: 0; border-bottom: 4px solid #444; }
	.tri.up.grey { border-bottom-color: #666; }
	.tri.r { border: 4px solid transparent; border-right: 0; border-left: 5px solid #333; }
	.tri.l { border: 4px solid transparent; border-left: 0; border-right: 5px solid #333; }
	.tri.bar { box-shadow: 0 -3px 0 -2px #333; }

	.appbtn {
		position: absolute;
		left: 0;
		top: 0;
		width: 41px;
		height: 41px;
		box-sizing: border-box;
		border: 1px solid #111;
		background: linear-gradient(#555, #3a3a3a 45%, #6e6e6e);
		z-index: 3;
		display: flex;
		align-items: center;
		padding-left: 2px;
	}
	.appbtn svg { flex: none; }
	.appbtn .tri { margin-left: -2px; }

	.title { display: flex; height: 23px; flex: none; }
	.qat {
		margin-left: 41px;
		width: 449px;
		flex: none;
		display: flex;
		align-items: center;
		background: linear-gradient(#f2f2f2, #c6c6c6);
		border-bottom: 1px solid #6f6f6f;
		box-sizing: border-box;
	}
	.qb { display: block; }
	.qb.on {
		background: #bcd8f2;
		outline: 1px solid #1f6fbb;
		padding: 2px;
		margin-right: 2px;
	}
	.qsep { width: 1px; height: 20px; background: #999; flex: none; }
	.bigA { font: bold 18px/18px "Liberation Sans", sans-serif; color: #333; width: 16px; }

	.doc {
		width: 297px;
		flex: none;
		display: flex;
		align-items: center;
		justify-content: center;
		background: linear-gradient(90deg, #6b6a4c, #97957a 30%, #a4a28c 55%, #88866a 85%, #605f46);
		padding-left: 5px;
		box-sizing: border-box;
		font-size: 12px;
		color: #111;
		letter-spacing: 0.4px;
	}
	.doc span { text-shadow: 0 0 6px #e8e8d8, 0 0 6px #e8e8d8; margin-left: 1px; }

	.arrowcell {
		width: 13px;
		flex: none;
		display: flex;
		align-items: center;
		justify-content: center;
		background: linear-gradient(#eee, #c6c6c6);
	}
	.search {
		width: 180px;
		flex: none;
		box-sizing: border-box;
		background: #fff;
		border: 1px solid #111;
		font-style: italic;
		color: #666;
		line-height: 21px;
		padding-left: 4px;
	}
	.tools {
		width: 263px;
		flex: none;
		display: flex;
		align-items: center;
		background: linear-gradient(#f2f2f2, #c6c6c6);
		border-bottom: 1px solid #6f6f6f;
		box-sizing: border-box;
		padding-left: 5px;
	}
	.tool { margin-right: 6px; flex: none; }
	.login { margin-left: -1px; color: #222; white-space: nowrap; flex: none; }
	.t1 { margin-left: 60px; }
	.xlogo { margin-left: 10px; flex: none; }
	.t2 { margin-left: 9px; }
	.help { margin-left: 9px; flex: none; }
	.q { margin-left: -12px; width: 9px; color: #1f5fb0; font: bold 13px "Liberation Sans", sans-serif; }
	.t3 { margin-left: 9px; }

	.winside {
		flex: 1;
		display: flex;
		padding-left: 17px;
		padding-right: 4px;
		background: linear-gradient(90deg, #6c6a50, #8e8d78);
	}
	.wbtn {
		width: 27px;
		height: 18px;
		box-sizing: border-box;
		border: 1px solid #444;
		border-top: 0;
		background: linear-gradient(#d4d4d4, #8a8a8a 45%, #6a6a6a);
		display: flex;
		align-items: center;
		justify-content: center;
		border-bottom-left-radius: 3px;
	}
	.wmin { width: 10px; height: 3px; background: #fff; margin-top: 3px; }
	.wres { width: 7px; height: 7px; border: 1px solid #fff; box-shadow: 2px -2px 0 -1px #444, 2px -2px 0 0 #fff; }
	.wclose {
		width: 48px;
		background: linear-gradient(#e28a76, #c24a32 50%, #b03a22);
		color: #fff;
		font: bold 15px/14px "Liberation Sans", sans-serif;
		border-radius: 0 0 3px 0;
	}

	.tabs {
		height: 21px;
		flex: none;
		display: flex;
		align-items: center;
		gap: 20px;
		padding-left: 55px;
		background: #9b9b9b;
		position: relative;
		z-index: 2;
	}
	.tab { line-height: 21px; color: #1c1c1c; white-space: nowrap; margin-top: 3px; }
	.tab.active {
		margin-left: -8px;
		padding: 0 8px;
		width: 88px;
		height: 19px;
		line-height: 19px;
		margin-top: 4px;
		box-sizing: content-box;
		text-align: center;
		background: linear-gradient(#f2fbe8, #e0eed6);
		border: 1px solid #5fd03a;
		border-bottom: 0;
		color: #111;
	}
	.tabmin {
		margin-left: 1px;
		width: 15px;
		height: 9px;
		background: #eee;
		border: 1px solid #333;
		border-radius: 3px;
		display: flex;
		align-items: center;
		justify-content: center;
		box-sizing: border-box;
		margin-top: 1px;
	}
	.t4 { margin-left: -17px; }

	.ribbon {
		height: 95px;
		flex: none;
		box-sizing: border-box;
		display: flex;
		gap: 1px;
		border-top: 2px solid #62cc3e;
		border-bottom: 2px solid #62cc3e;
		padding-left: 2px;
		background: #d3d3d3;
		box-shadow: inset 2px 0 0 #62cc3e;
	}
	.panel { display: flex; flex-direction: column; background: #fff; flex: none; }
	.panel.first { margin-left: 3px; }
	.panel.next { margin-left: 1px; }
	.panel.last { margin-left: 2px; }
	.panel footer {
		height: 17px;
		box-sizing: border-box;
		padding-top: 1px;
		line-height: 16px;
		text-align: center;
		color: #444;
		background: linear-gradient(#e9e9e9, #dcdcdc);
		display: flex;
		justify-content: center;
		align-items: center;
		gap: 5px;
		flex: none;
	}
	.ctx footer { background: linear-gradient(#e4f3d8, #cfe6c0); }
	.pbody { flex: 1; display: flex; min-height: 0; }
	.col { flex-direction: column; align-items: center; }
	.pad3 { padding-left: 3px; }
	.pad2 { padding-left: 2px; }

	.big {
		flex: 1;
		display: flex;
		flex-direction: column;
		align-items: center;
		box-sizing: border-box;
		padding-top: 2px;
		height: 73px;
		width: 38px;
		color: #444;
		line-height: 18px;
		white-space: nowrap;
	}
	.big.on { background: #b8d5f0; outline: 1px solid #1f6fbb; outline-offset: -1px; color: #333; }
	.pbody > .big { margin-top: 1px; }
	.bigicon { height: 34px; margin-bottom: 3px; display: flex; align-items: center; }

	.typeic { padding-top: 3px; height: 36px; box-sizing: border-box; }
	.propbtn {
		width: 38px;
		height: 34px;
		box-sizing: border-box;
		background: #b8d5f0;
		border: 1px solid #1f6fbb;
		display: flex;
		align-items: center;
		justify-content: center;
		margin-top: 1px;
	}

	.clip { width: 50px; display: flex; flex-direction: column; align-items: center; }
	.tallic { height: 40px; margin-top: 2px; }
	.dimt { color: #bbb; line-height: 16px; }
	.mt { margin-top: 6px; }
	.smallcol { display: flex; flex-direction: column; padding-top: 1px; }
	.smallcol div { height: 24px; display: flex; align-items: center; padding-left: 1px; }

	.geo {
		display: grid;
		grid-template-columns: 104px 24px 38px;
		grid-auto-rows: 24px;
		padding: 1px 0 0 6px;
	}
	.grow { display: flex; align-items: center; gap: 4px; color: #333; }
	.grow .tri { margin-left: 5px; }
	.cell { display: flex; align-items: center; gap: 5px; }

	.modbig {
		width: 156px;
		margin-left: 3px;
		display: grid;
		grid-template-columns: repeat(4, 39px);
		grid-auto-rows: 38px;
		justify-items: center;
		align-items: center;
		flex: none;
		padding-top: 1px;
		align-content: start;
	}
	.modsmall {
		display: grid;
		grid-template-columns: repeat(3, 25px);
		grid-auto-rows: 24px;
		justify-items: center;
		align-items: center;
		align-content: start;
		padding: 1px 0 0 0;
	}

	.viewg {
		display: grid;
		grid-template-columns: 32px 26px;
		grid-auto-rows: 24px;
		padding: 1px 0 0 6px;
		align-items: center;
	}
	.viewg div { display: flex; align-items: center; gap: 3px; }

	.measure { flex-direction: column; padding: 6px 0 0 7px; gap: 9px; }
	.measure div { display: flex; align-items: center; gap: 3px; }

	.create {
		display: grid;
		grid-template-columns: 38px 38px;
		grid-auto-rows: 37px;
		padding: 3px 0 0 5px;
		align-content: start;
		justify-items: center;
	}

	.slope { padding: 5px 0 0 1px; gap: 5px; }
	.slopebtns { display: flex; flex-direction: column; gap: 1px; width: 78px; flex: none; }
	.sb {
		height: 21px;
		box-sizing: border-box;
		background: #f3f3f3;
		border: 1px solid #ddd;
		display: flex;
		align-items: center;
		gap: 4px;
		padding-left: 3px;
		color: #444;
		white-space: nowrap;
	}
	.sb.on { background: #b8d5f0; border-color: #1f6fbb; }
	.slopeval { flex: 1; display: flex; flex-direction: column; min-width: 0; }
	.sl { line-height: 16px; margin-top: 1px; color: #444; }
	.sc {
		height: 22px;
		width: 125px;
		box-sizing: border-box;
		margin-top: 3px;
		border: 1px solid #ddd;
		background: #f5f5f5;
		color: #aaa;
		display: flex;
		align-items: center;
		justify-content: space-between;
		padding: 0 4px;
		letter-spacing: 0.3px;
	}
	.st { display: flex; align-items: center; gap: 5px; margin-top: 4px; padding-left: 3px; color: #444; white-space: nowrap; height: 20px; }

	.ribfill { flex: 1; background: linear-gradient(150deg, #d4e6c8 30%, #a3ac98 70%, #8e8e8e); }

	.options {
		height: 28px;
		flex: none;
		display: flex;
		align-items: center;
		background: #dae2d3;
		white-space: nowrap;
		color: #333;
	}
	.o1 { margin-left: 9px; width: 88px; }
	.osep { width: 1px; height: 20px; background: #9fa89a; flex: none; }
	.s1 { margin-left: 22px; }
	.o2 { margin-left: 13px; width: 30px; }
	.ocombo {
		height: 22px;
		box-sizing: border-box;
		background: #fff;
		border: 1px solid #b5d0e6;
		display: flex;
		align-items: center;
		justify-content: space-between;
		padding: 0 4px;
		letter-spacing: 0.3px;
		color: #222;
		flex: none;
	}
	.c1 { width: 89px; }
	.s2 { margin-left: 11px; }
	.o3 { margin-left: 15px; width: 42px; }
	.c2 { width: 98px; border-color: #eee; }
	.obtn {
		height: 22px;
		box-sizing: border-box;
		border: 1px solid #aaa;
		background: linear-gradient(#f6f6f6, #dcdcdc);
		display: flex;
		align-items: center;
		justify-content: center;
		flex: none;
	}
	.lock { width: 20px; margin-left: 8px; }
	.apply { width: 34px; margin-left: 6px; }
	.s3 { margin-left: 9px; }
	.olevel { margin-left: 11px; }
	.odis {
		height: 21px;
		box-sizing: border-box;
		background: #d4dccd;
		border: 1px solid #b9c2b2;
		color: #8e968a;
		display: flex;
		align-items: center;
		justify-content: space-between;
		padding: 0 3px;
		flex: none;
		letter-spacing: 0.3px;
	}
	.level { width: 80px; margin-left: 3px; background: #c8cfc2; }
	.tagb { width: 43px; margin-left: 6px; }
	.chk { width: 11px; height: 11px; border: 1px solid #aaa; background: #e4e4e4; margin-left: 6px; flex: none; }
	.lead { color: #8e968a; margin-left: 3px; width: 24px; }
	.owidth { margin-left: 10px; }
	.dist { width: 118px; margin-left: 4px; }

	.main { height: 538px; flex: none; display: flex; }
	.phead {
		height: 18px;
		display: flex;
		align-items: center;
		justify-content: space-between;
		background: #bccad8;
		padding: 0 5px 0 4px;
		color: #555;
		flex: none;
	}
	.phead b { color: #111; font: bold 15px/15px "Liberation Sans", sans-serif; }

	.props {
		width: 231px;
		flex: none;
		display: flex;
		flex-direction: column;
		background: #f0f0f0;
	}
	.typesel {
		position: relative;
		height: 72px;
		margin: 3px 1px 2px 2px;
		border: 1px solid #ccc;
		box-sizing: border-box;
		background: linear-gradient(#fff, #eee);
		display: flex;
		flex: none;
		padding: 3px 0 0 2px;
	}
	.thumb { width: 64px; height: 64px; border: 1px solid #ccc; background: #fff; flex: none; }
	.typetxt { display: flex; flex-direction: column; line-height: 16px; margin: 19px 0 0 4px; color: #444; }
	.arrow { position: absolute; left: 216px; top: 35px; }
	.redbox { position: absolute; border: 3px solid #f2303a; box-sizing: border-box; pointer-events: none; }
	.redbox.one { left: 67px; top: 35px; width: 67px; height: 19px; }
	.redbox.two { left: 97px; top: -2px; width: 61px; height: 20px; }

	.newrow { display: flex; height: 25px; align-items: center; flex: none; padding-left: 3px; }
	.newcombo {
		width: 141px;
		height: 24px;
		box-sizing: border-box;
		border: 1px solid #888;
		border-radius: 3px;
		background: linear-gradient(#f4f4f4, #d4d4d4);
		display: flex;
		align-items: center;
		justify-content: space-between;
		padding: 0 4px 0 2px;
		color: #111;
	}
	.newcombo span { margin-top: -2px; }
	.newcombo .tri { border-top-color: #000; border-left-width: 4px; border-right-width: 4px; }
	.edittype { display: flex; align-items: center; gap: 3px; margin-left: 6px; color: #222; white-space: nowrap; }
	.edittype span { margin-top: -2px; }

	.propbody { flex: 1; display: flex; min-height: 0; margin-top: 1px; overflow: hidden; }
	.ptable { width: 209px; margin-left: 2px; flex: none; background: #fff; height: 392px; overflow: hidden; }
	.sect {
		height: 20px;
		box-sizing: border-box;
		padding: 0 5px 2px 2px;
		background: #d9d9d9;
		display: flex;
		align-items: center;
		justify-content: space-between;
		font-weight: 500;
		color: #333;
	}
	.prow {
		position: relative;
		height: 20px;
		box-sizing: border-box;
		display: grid;
		grid-template-columns: 104px 105px;
		border-bottom: 1px dotted #555;
		line-height: 19px;
		color: #111;
	}
	.prow.dim { color: #8c8c8c; }
	.lab { padding-left: 10px; border-right: 1px dotted #555; }
	.val { padding-left: 3px; letter-spacing: 0.3px; white-space: nowrap; overflow: hidden; }
	.val.edit { border: 1px solid #111; line-height: 17px; padding-left: 2px; }

	.pscroll { width: 16px; margin-left: 2px; background: #f0f0f0; display: flex; flex-direction: column; align-items: center; padding-top: 8px; box-sizing: border-box; height: 392px; }
	.pthumb {
		margin-top: 6px;
		width: 14px;
		height: 142px;
		background: linear-gradient(90deg, #e8e8e8, #cfcfcf);
		border: 1px solid #aaa;
		border-radius: 2px;
		box-sizing: border-box;
		display: flex;
		align-items: center;
		justify-content: center;
		flex: none;
	}
	.pthumb span { width: 7px; height: 7px; background: repeating-linear-gradient(#555 0 1px, transparent 1px 3px); }
	.end { margin-top: auto; margin-bottom: 8px; }

	.pfoot {
		height: 24px;
		flex: none;
		display: flex;
		align-items: center;
		justify-content: space-between;
		padding: 0 5px 0 4px;
		margin-bottom: 1px;
	}
	.pfoot a { color: #1f5fd0; margin-top: -3px; }
	.papply {
		width: 73px;
		height: 19px;
		box-sizing: border-box;
		border: 1px solid #aaa;
		border-radius: 2px;
		background: #e6e6e6;
		text-align: center;
		line-height: 17px;
		color: #999;
	}

	.viewwrap { width: 817px; margin-left: 4px; flex: none; display: flex; flex-direction: column; }
	.viewtop { height: 518px; display: flex; flex: none; background: #f0f0f0; }
	.draw { display: block; flex: none; background: #000; }
	.vscroll {
		flex: 1;
		display: flex;
		flex-direction: column;
		align-items: center;
		padding-top: 8px;
		background: #ececec;
	}
	.vthumb {
		width: 15px;
		height: 16px;
		margin-top: 241px;
		background: linear-gradient(#f6f6f6, #cdcdcd);
		border: 1px solid #aaa;
		border-radius: 2px;
		box-sizing: border-box;
		flex: none;
	}

	.viewbar {
		height: 18px;
		display: flex;
		align-items: center;
		background: #f0f0f0;
		flex: none;
	}
	.scale { margin-left: 22px; width: 41px; white-space: nowrap; letter-spacing: 0.3px; color: #111; }
	.vi { display: block; }
	.hscroll {
		margin-left: 10px;
		flex: 1;
		height: 100%;
		background: #e9e9e9;
		display: flex;
		align-items: center;
		padding: 0 4px 0 0;
	}
	.hscroll .tri.l { border-right-color: #222; }
	.hthumb {
		width: 15px;
		height: 16px;
		margin-left: 227px;
		background: linear-gradient(#f6f6f6, #cdcdcd);
		border: 1px solid #aaa;
		border-radius: 2px;
		box-sizing: border-box;
		flex: none;
	}
	.hscroll .tri.r { margin-left: auto; border-left-color: #222; }
	.grip { width: 17px; height: 100%; background: #ececec; flex: none; }

	.browser { width: 307px; margin-left: 7px; flex: none; display: flex; flex-direction: column; background: #f0f0f0; }
	.bbody { flex: 1; display: flex; margin-top: 3px; min-height: 0; }
	.tree {
		width: 291px;
		flex: none;
		box-sizing: border-box;
		border-top: 2px solid #777;
		border-left: 2px solid #777;
		background: #fff;
		overflow: hidden;
	}
	.node { position: relative; height: 20px; line-height: 17px; color: #111; white-space: nowrap; }
	.node span { position: relative; display: inline-block; height: 20px; padding: 0 2px; margin: -1px 0 0 -2px; }
	.node span.sel { background: #e0e0e0; }
	.vl { position: absolute; left: 27px; top: 0; height: 100%; border-left: 1px dotted #888; }
	.vl.half { height: 50%; }
	.v2 { left: 47px; height: 50%; }
	.v3 { left: 67px; }
	.hl { position: absolute; left: 68px; width: 15px; top: 9px; border-top: 1px dotted #888; }
	.hl0 { left: 33px; width: 9px; }
	.hl1 { left: 53px; width: 9px; }
	.exp {
		position: absolute;
		top: 5px;
		width: 9px;
		height: 9px;
		box-sizing: border-box;
		border: 1px solid #999;
		background: #eee;
		color: #2a4fa8;
		font: bold 9px/7px "Liberation Sans", sans-serif;
		text-align: center;
	}
	.e0 { left: 23px; }
	.e1 { left: 43px; }

	.bscroll {
		flex: 1;
		display: flex;
		flex-direction: column;
		align-items: center;
		padding-top: 8px;
		background: #ececec;
	}
	.bthumb {
		width: 15px;
		height: 165px;
		margin-top: 160px;
		background: linear-gradient(90deg, #f0f0f0, #d2d2d2);
		border: 1px solid #aaa;
		border-radius: 2px;
		box-sizing: border-box;
		flex: none;
	}

	.status {
		height: 23px;
		flex: none;
		box-sizing: border-box;
		display: flex;
		align-items: center;
		background: linear-gradient(#e2e2e2, #c6c6c6);
		border-top: 1px solid #9a9a9a;
	}
	.stext { margin-left: 3px; width: 476px; color: #222; white-space: nowrap; letter-spacing: 0.2px; }
	.sbox { display: flex; align-items: center; flex: none; }
	.sbox em { font-style: normal; margin-left: 5px; color: #222; }
	.b1 { margin-left: 5px; }
	.scombo {
		height: 20px;
		background: #fff;
		display: flex;
		align-items: center;
		justify-content: space-between;
		padding: 0 3px 0 4px;
		box-sizing: border-box;
		flex: none;
		color: #999;
	}
	.wsc { width: 205px; margin-left: 6px; justify-content: flex-end; }
	.b2 { margin-left: 5px; }
	.b3 { margin-left: 23px; }
	.b4 { margin-left: 11px; }
	.mod { width: 154px; margin-left: 8px; }
	.b5 { margin-left: 167px; }
	.b6 { margin-left: 8px; }
	.b7 { margin-left: 6px; }

	.taskbar { flex: 1; position: relative; background: linear-gradient(90deg, #2b2b2b, #1c1c1c 60%, #262626); border-top: 1px solid #777; box-sizing: border-box; overflow: hidden; }
	.orb { position: absolute; left: 12px; top: 1px; width: 30px; height: 30px; border-radius: 50%; background: #b8d8ee; border: 1px solid #e8f2f8; box-sizing: border-box; }
	.dot { position: absolute; top: 2px; width: 10px; height: 10px; border-radius: 50%; }
	.dot.g { left: 72px; background: #9cc83a; }
	.dot.bl { left: 85px; background: #5ab0e8; }
	.tbtns { position: absolute; inset: 0; }
	.tb { position: absolute; top: 0; height: 12px; background: linear-gradient(#9a9a9a, #6a6a6a); border-radius: 2px 2px 0 0; }
	.clock { position: absolute; left: 1301px; top: -2px; color: #fff; font-size: 12px; }
	.desk { position: absolute; right: 0; top: 0; width: 14px; height: 8px; background: #777; }

	.ime {
		position: absolute;
		left: 1223px;
		top: 682px;
		width: 126px;
		height: 42px;
		border-radius: 9px;
		background: #f0efe4;
		box-shadow: 1px 2px 3px rgba(0, 0, 0, 0.5);
		overflow: hidden;
		z-index: 4;
		color: #111;
	}
	.ime span { position: absolute; top: 11px; font-size: 15px; line-height: 18px; }
	.ime .c1 { left: 11px; }
	.ime .c2 { left: 54px; }
	.taiji { position: absolute; left: 33px; top: 9px; }
	.tea { position: absolute; right: 0; top: 0; }
</style>
